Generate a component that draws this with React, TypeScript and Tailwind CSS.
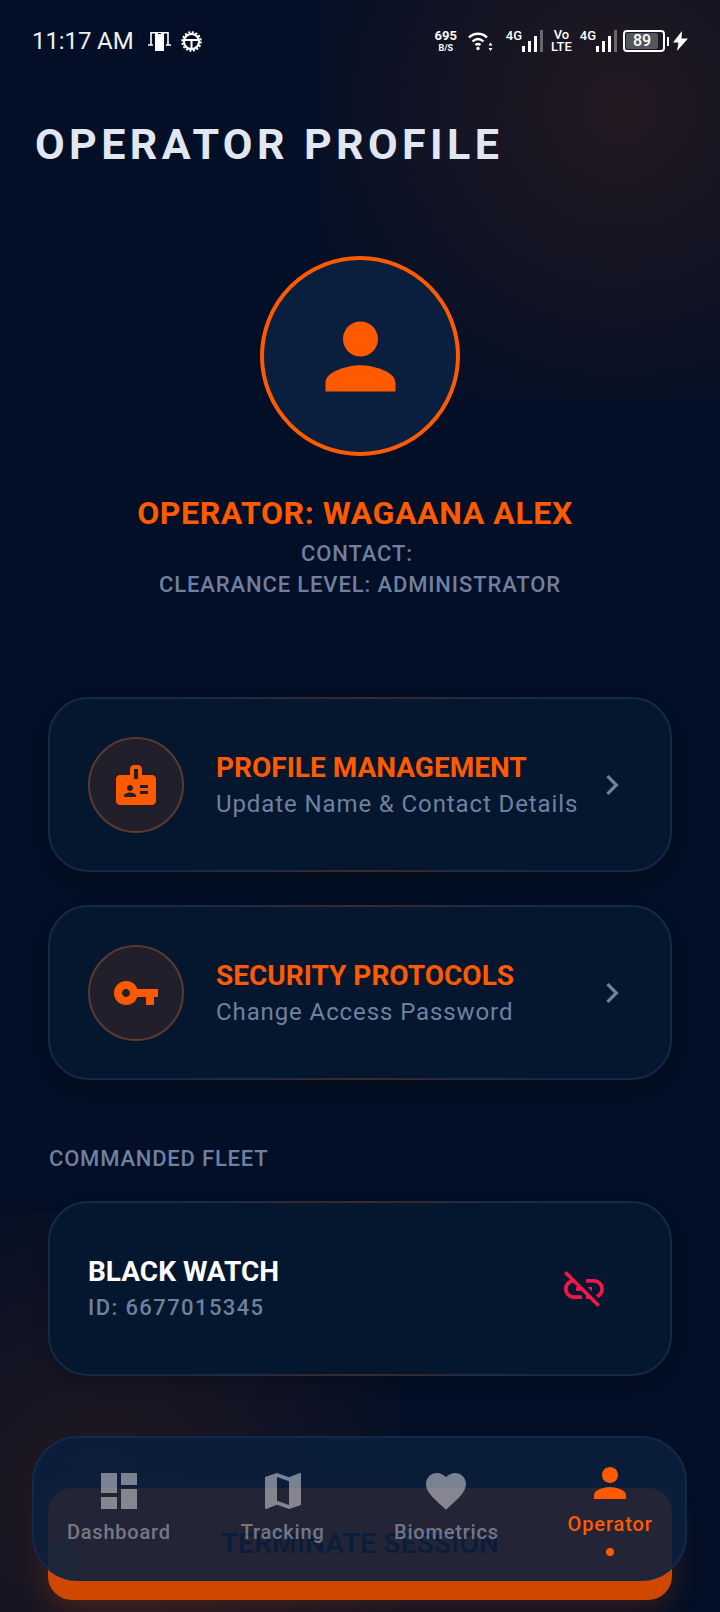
import { MdBadge, MdChevronRight, MdDashboard, MdFavorite, MdLinkOff, MdMap, MdPerson, MdVpnKey } from "react-icons/md";
import type { ReactNode } from "react";

type MenuCard = {
  title: string;
  subtitle: string;
  icon: ReactNode;
};

const menuCards: MenuCard[] = [
  { title: "PROFILE MANAGEMENT", subtitle: "Update Name & Contact Details", icon: <MdBadge size={48} /> },
  { title: "SECURITY PROTOCOLS", subtitle: "Change Access Password", icon: <MdVpnKey size={48} /> },
];

const navItems = [
  { label: "Dashboard", icon: <MdDashboard size={48} /> },
  { label: "Tracking", icon: <MdMap size={48} /> },
  { label: "Biometrics", icon: <MdFavorite size={48} /> },
];

function SignalBars() {
  return (
    <svg width="21" height="22" viewBox="0 0 21 22" fill="white">
      <rect x="0" y="16" width="3" height="6" />
      <rect x="6" y="11" width="3" height="11" />
      <rect x="12" y="6" width="3" height="16" />
      <rect x="18" y="0" width="3" height="22" opacity="0.35" />
    </svg>
  );
}

function StatusBar() {
  return (
    <div className="flex h-[24px] items-center justify-between pl-[32px] pr-[32px] pt-[2px] text-white">
      <div className="flex items-center">
        <span className="text-[24px] leading-none tracking-[-0.1px] text-[#eef0f4]">11:17 AM</span>
        <svg className="ml-[14px]" width="23" height="20" viewBox="0 0 23 20" fill="none">
          <path d="M3 14V1.7h17V14" stroke="white" strokeWidth="1.6" />
          <path d="M0 14h5M18 14h5" stroke="white" strokeWidth="1.3" />
          <rect x="7" y="2" width="9" height="18" fill="white" />
          <rect x="10" y="2" width="3" height="1" fill="#020f26" />
        </svg>
        <svg className="ml-[10px]" width="21" height="21" viewBox="0 0 21 21" fill="none" stroke="white">
          <circle cx="10.5" cy="10.5" r="7.6" strokeWidth="2.2" />
          <circle cx="10.5" cy="10.5" r="9.4" strokeWidth="1.8" strokeDasharray="2 1.7" />
          <path d="M4 9h13M10.5 9v8" strokeWidth="2" />
        </svg>
      </div>
      <div className="flex items-center">
        <div className="flex w-[24px] flex-col items-center font-bold leading-none">
          <span className="text-[13px]">695</span>
          <span className="mt-[2px] text-[9px]">B/S</span>
        </div>
        <svg className="ml-[10px]" width="25" height="20" viewBox="0 0 25 20" fill="none" stroke="white" strokeWidth="2.4">
          <path d="M1 6.5C6 1.5 14 1.5 19 6.5" />
          <path d="M4.5 10.5C8 7.2 12 7.2 15.5 10.5" />
          <path d="M7.5 14C9 12.8 11 12.8 12.5 14" />
          <circle cx="10" cy="17.5" r="1.7" fill="white" stroke="none" />
          <path d="M22.5 11.5l-2 3h4zM22.5 20l-2-3h4z" fill="white" stroke="none" />
        </svg>
        <span className="ml-[13px] self-start text-[13px] font-medium leading-none">4G</span>
        <SignalBars />
        <div className="ml-[8px] flex flex-col items-center text-[13px] font-medium leading-[12px]">
          <span>Vo</span>
          <span>LTE</span>
        </div>
        <span className="ml-[8px] self-start text-[13px] font-medium leading-none">4G</span>
        <SignalBars />
        <div className="ml-[6px] flex h-[22px] w-[42px] items-center rounded-[4px] border-2 border-white p-[1px]">
          <div className="flex h-full w-[32px] items-center justify-center rounded-[2px] bg-[#55565c] text-[16px] font-medium leading-none">89</div>
        </div>
        <div className="ml-[2px] h-[9px] w-[2px] bg-white" />
        <svg className="ml-[4px]" width="15" height="20" viewBox="0 0 15 20" fill="white">
          <path d="M9 0L0 11.5h5.5L4 20l11-12.5H8.5z" />
        </svg>
      </div>
    </div>
  );
}

function GlassCard({ children }: { children: ReactNode }) {
  return (
    <div className="relative flex h-[175px] items-center rounded-[40px] border-2 border-[#15294a] bg-[#05172f] px-[38px] shadow-[0_6px_16px_rgba(0,0,0,0.25)]">
      <div className="absolute -top-[2px] left-[120px] right-[120px] h-[2px] bg-[linear-gradient(90deg,transparent,#3a2a2c,transparent)]" />
      <div className="absolute -bottom-[2px] left-[120px] right-[120px] h-[2px] bg-[linear-gradient(90deg,transparent,#3a2a2c,transparent)]" />
      {children}
    </div>
  );
}

export default function App() {
  return (
    <div className="relative h-[1612px] w-[720px] overflow-hidden bg-[#020f26] font-['Roboto',sans-serif]">
      <div className="absolute right-0 top-0 h-[400px] w-[400px] bg-[radial-gradient(circle_at_75%_27%,rgba(255,90,0,0.13),transparent_85%)]" />
      <div className="absolute bottom-0 left-0 h-[400px] w-[400px] bg-[radial-gradient(circle_at_25%_73%,rgba(255,90,0,0.13),transparent_85%)]" />

      <div className="relative pt-[28px]">
        <StatusBar />

        <h1 className="ml-[35px] mt-[67px] text-[43px] font-bold leading-[50px] tracking-[4.4px] text-[#e1e6f3]">OPERATOR PROFILE</h1>

        <div className="mt-[87px] flex flex-col items-center">
          <div className="flex h-[200px] w-[200px] items-center justify-center rounded-full border-4 border-[#ff5a00] bg-[#0a1f3d] text-[#ff5a00]">
            <MdPerson size={105} />
          </div>
          <h2 className="mr-[10px] mt-[38px] text-[32px] font-bold leading-[38px] tracking-[0.6px] text-[#ff5a00]">OPERATOR: WAGAANA ALEX</h2>
          <p className="mr-[6px] mt-[6px] text-[22px] font-medium leading-[32px] tracking-[0.9px] text-[#6f80a0]">CONTACT:</p>
          <p className="text-[22px] font-medium leading-[30px] tracking-[0.87px] text-[#6f80a0]">CLEARANCE LEVEL: ADMINISTRATOR</p>
        </div>

        <div className="mt-[97px] flex flex-col gap-[33px] px-[48px]">
          {menuCards.map(card => (
            <GlassCard key={card.title}>
              <div className="flex h-[96px] w-[96px] shrink-0 items-center justify-center rounded-full border-2 border-[#5a3a2e] bg-[#201f2b] text-[#ff5a00]">
                {card.icon}
              </div>
              <div className="ml-[32px] flex-1">
                <div className="text-[28px] font-bold leading-[36px] text-[#ff5a00]">{card.title}</div>
                <div className="mt-[2px] text-[24px] leading-[32px] tracking-[0.9px] text-[#6f80a0]">{card.subtitle}</div>
              </div>
              <MdChevronRight size={40} className="text-[#6f80a0]" />
            </GlassCard>
          ))}
        </div>

        <div className="ml-[49px] mt-[64px] text-[22px] font-medium leading-[30px] tracking-[0.8px] text-[#6f80a0]">COMMANDED FLEET</div>

        <div className="mt-[27px] px-[48px]">
          <GlassCard>
            <div className="flex-1">
              <div className="text-[28px] font-bold leading-[36px] text-white">BLACK WATCH</div>
              <div className="mt-[2px] text-[22px] font-medium leading-[32px] tracking-[1.4px] text-[#6f80a0]">ID: 6677015345</div>
            </div>
            <MdLinkOff size={48} className="mr-[24px] text-[#f0184a]" />
          </GlassCard>
        </div>

        <button className="relative mx-[48px] mt-[112px] flex h-[112px] w-[624px] items-center justify-center rounded-[24px] bg-[#d04800] shadow-[0_8px_30px_rgba(255,90,0,0.22)]">
          <span className="text-[28px] font-medium tracking-[0.3px] text-[#02142e]">TERMINATE SESSION</span>
        </button>
      </div>

      <nav className="absolute left-[32px] top-[1436px] h-[145px] w-[655px] overflow-hidden rounded-[46px] border-2 border-[#12294a] bg-[#0a1f3d]/[0.88]">
        <div className="absolute bottom-0 left-[14px] top-[103px] w-[28px] bg-[#0a3a58]/15" />
        <div className="relative ml-[3px] grid w-[655px] grid-cols-4">
          {navItems.map(item => (
            <div key={item.label} className="flex flex-col items-center pt-[29px] text-white/45">
              {item.icon}
              <span className="mt-[4px] text-[20px] font-medium leading-[26px] tracking-[0.8px] text-white/40">{item.label}</span>
            </div>
          ))}
          <div className="flex flex-col items-center pt-[21px] text-[#ff5a00]">
            <MdPerson size={48} />
            <span className="mt-[4px] text-[20px] font-medium leading-[26px] tracking-[0.9px]">Operator</span>
            <span className="mt-[11px] h-[8px] w-[8px] rounded-full bg-[#ff5a00]" />
          </div>
        </div>
      </nav>
    </div>
  );
}
